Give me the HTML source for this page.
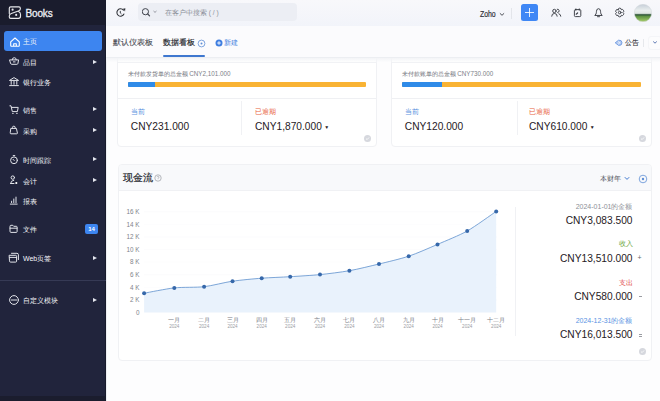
<!DOCTYPE html>
<html><head><meta charset="utf-8">
<style>
*{margin:0;padding:0;box-sizing:border-box}
html,body{width:660px;height:401px;overflow:hidden;background:#fdfdfe;font-family:"Liberation Sans",sans-serif;position:relative}
.a{position:absolute}
#sb{left:0;top:0;width:106px;height:401px;background:#21243c}
#sbh{left:0;top:0;width:106px;height:25px;background:#1a1c2d}
#sbb{left:0;top:396px;width:106px;height:5px;background:#1b1d2e}
.mi{position:absolute;left:0;width:106px;height:20px;color:#f4f5f9;font-size:7px;line-height:20px;}
.mi .t{position:absolute;left:23px;top:1.2px}
.mi .ar{position:absolute;left:93px;top:7.5px;width:0;height:0;border-left:4px solid #e4e6ee;border-top:2.5px solid transparent;border-bottom:2.5px solid transparent}
.mi svg{position:absolute;left:9px;top:5px}
.badge{position:absolute;left:85px;top:5px;width:13px;height:10px;background:#3d85f0;border-radius:2px;color:#fff;font-size:6px;line-height:10px;text-align:center;font-weight:bold}
#top{left:106px;top:0;width:554px;height:26px;background:linear-gradient(#f8f8fb,#f2f4fa)}
#tabs{left:106px;top:26px;width:554px;height:31px;background:#fbfbfd}
.card{position:absolute;background:#fff;border:1px solid #f0f1f4;border-radius:4px}
.lbl{position:absolute;font-size:6px;line-height:8px;white-space:nowrap}
.num{position:absolute;font-size:10.2px;line-height:12px;color:#1f2024;white-space:nowrap}
.gi{position:absolute;width:7px;height:7px}
</style></head><body>
<div id="sb" class="a"></div>
<div id="sbh" class="a"></div>
<div id="sbb" class="a"></div><div class="a" style="left:105px;top:0;width:1px;height:401px;background:#181b2b"></div><div class="a" style="left:106px;top:0;width:1px;height:401px;background:#eceef3"></div>
<svg class="a" style="left:8px;top:5px" width="14" height="15" viewBox="0 0 14 15" fill="none" stroke="#e6e7ec" stroke-width="1.15" stroke-linejoin="round" stroke-linecap="round"><path d="M1.3 8.6 V3.3 Q1.3 1.9 2.7 1.9 H10.9 Q12.4 1.9 12.4 3.4 Q12.4 5.3 10.4 6 L3.3 8.5 Q1.3 9.2 1.3 11 V11.9 Q1.3 13.3 2.7 13.3 H10.5 Q12.5 13.3 12.5 11.3 V9.4 Q12.5 7.4 10.9 6.7"/><circle cx="4.6" cy="4.7" r="1.1" fill="#e6e7ec" stroke="none"/><circle cx="8.2" cy="9.9" r="1.05" fill="#e6e7ec" stroke="none"/></svg>
<div class="a" style="left:25.5px;top:6.5px;font-size:10px;line-height:13px;color:#eceef3;-webkit-text-stroke:0.3px #eceef3;letter-spacing:-0.15px">Books</div>
<div class="a" style="left:4px;top:31px;width:98px;height:20px;background:#3d85f0;border-radius:3px"></div><div class="mi" style="top:31.0px"><span class="t">主页</span></div><div class="mi" style="top:52.0px"><span class="t">品目</span><i class="ar"></i></div><div class="mi" style="top:72.0px"><span class="t">银行业务</span></div><div class="mi" style="top:99.5px"><span class="t">销售</span><i class="ar"></i></div><div class="mi" style="top:120.5px"><span class="t">采购</span><i class="ar"></i></div><div class="mi" style="top:149.5px"><span class="t">时间跟踪</span><i class="ar"></i></div><div class="mi" style="top:170.5px"><span class="t">会计</span><i class="ar"></i></div><div class="mi" style="top:190.5px"><span class="t">报表</span></div><div class="mi" style="top:219.0px"><span class="t">文件</span><span class="badge">14</span></div><div class="mi" style="top:248.0px"><span class="t">Web页签</span><i class="ar"></i></div><div class="a" style="left:0;top:279.5px;width:106px;height:1px;background:#363a55"></div><div class="mi" style="top:290.0px"><span class="t">自定义模块</span><i class="ar"></i></div><svg class="a" style="left:0;top:0" width="106" height="401" viewBox="0 0 106 401" fill="none" stroke-linejoin="round" stroke-linecap="round"><path d="M10.7 41.8 L15 38 L19.3 41.8 V45.6 Q19.3 46.3 18.6 46.3 H11.4 Q10.7 46.3 10.7 45.6 Z M13.7 46.3 V43.7 H16.3 V46.3" stroke="#fff" stroke-width="1.1"/><path d="M12.2 59.8 Q12.2 57.7 14.25 57.7 Q16.3 57.7 16.3 59.8 M9.9 59.9 H18.6 L17.9 63.5 Q17.7 64.3 16.9 64.3 H11.6 Q10.8 64.3 10.6 63.5 Z M13.4 61.9 H15.1" stroke="#e2e4ea" stroke-width="1"/><path d="M9.8 80.2 L14 77.6 L18.2 80.2 Z M11.2 81.3 V84.3 M14 81.3 V84.3 M16.8 81.3 V84.3 M9.6 85.6 H18.4" stroke="#e2e4ea" stroke-width="1"/><path d="M9.9 105.8 H11 L12.3 111.6 H17.4 L18.2 107.4 H11.5" stroke="#e2e4ea" stroke-width="1"/><circle cx="12.9" cy="113.4" r="0.7" fill="#e2e4ea"/><circle cx="16.9" cy="113.4" r="0.7" fill="#e2e4ea"/><path d="M12.4 128.4 V127.6 Q12.4 126.2 13.8 126.2 Q15.2 126.2 15.2 127.6 V128.4 M11.2 128.4 H16.4 L17.4 133 Q17.5 133.8 16.7 133.8 H10.9 Q10.1 133.8 10.2 133 Z" stroke="#e2e4ea" stroke-width="1"/><circle cx="14" cy="160.3" r="3.4" stroke="#e2e4ea" stroke-width="1"/><path d="M13.2 155.6 H14.8 M13 159.3 L14.2 160.5" stroke="#e2e4ea" stroke-width="1"/><circle cx="12.8" cy="177.6" r="1.7" stroke="#e2e4ea" stroke-width="1"/><path d="M10.6 183.5 Q10.6 180.6 13.8 180.2" stroke="#e2e4ea" stroke-width="1"/><path d="M10.6 183.5 H14" stroke="#e2e4ea" stroke-width="1"/><circle cx="16.3" cy="183" r="1.1" fill="#fff" stroke="none"/><path d="M10.3 204.1 H17.2 M11.6 202.6 V201.2 M13.8 202.6 V199 M16 202.6 V197.1" stroke="#e2e4ea" stroke-width="1"/><path d="M10 226.2 Q10 225.3 10.9 225.3 H12.8 L13.7 226.3 H16.3 Q17.1 226.3 17.1 227.1 V231.6 Q17.1 232.4 16.3 232.4 H10.8 Q10 232.4 10 231.6 Z M10 228.2 H17.1" stroke="#e2e4ea" stroke-width="1"/><path d="M11.5 253.3 H17 Q18.4 253.3 18.4 254.7 V259.6" stroke="#e2e4ea" stroke-width="1"/><path d="M9.5 255.3 H15.6 Q16.6 255.3 16.6 256.3 V261.2 Q16.6 262.1 15.6 262.1 H10.5 Q9.5 262.1 9.5 261.2 Z M9.5 257.4 H16.6" stroke="#e2e4ea" stroke-width="1"/><circle cx="14" cy="300" r="4.4" stroke="#e2e4ea" stroke-width="1"/><path d="M11.4 300 H16.6" stroke="#e2e4ea" stroke-width="1"/></svg>
<!-- top bar -->
<div id="top" class="a"></div>
<svg class="a" style="left:106px;top:0" width="30" height="26" viewBox="106 0 30 26" fill="none" stroke="#2f3238" stroke-width="1.05" stroke-linecap="round"><path d="M123.43 10.12 A3.7 3.7 0 1 0 123.95 14.06"/><path d="M123.2 8.9 L125.2 8.6 L124.8 10.8 Z" fill="#2f3238" stroke-width="0.4" stroke-linejoin="round"/><path d="M120.3 11.3 V13 L121.2 13.7" stroke-width="0.9"/></svg>
<div class="a" style="left:138px;top:3px;width:159px;height:18px;background:#eceef4;border-radius:4px"></div>
<svg class="a" style="left:142px;top:7px" width="18" height="10" viewBox="0 0 18 10"><circle cx="3.4" cy="4.7" r="3.1" fill="none" stroke="#3f434c" stroke-width="1"/><path d="M5.7 7 L7.6 8.9" stroke="#3f434c" stroke-width="1.1" stroke-linecap="round"/><path d="M11.5 4 L13 5.4 L14.5 4" fill="none" stroke="#7d808a" stroke-width="0.8"/></svg>
<div class="a" style="left:165px;top:8px;font-size:6.6px;line-height:9px;color:#8b8e98;white-space:nowrap">在客户中搜索 ( / )</div>
<div class="a" style="left:480.3px;top:9px;font-size:8.5px;line-height:11px;color:#2e3036;-webkit-text-stroke:0.2px #2e3036;transform:scaleX(0.81);transform-origin:0 0;white-space:nowrap">Zoho</div>
<svg class="a" style="left:498.5px;top:11.5px" width="6" height="5" viewBox="0 0 6 5"><path d="M0.9 1.3 L3 3.3 L5.1 1.3" fill="none" stroke="#3a3d45" stroke-width="0.9"/></svg>
<div class="a" style="left:511px;top:8px;width:1px;height:11px;background:#e3e5ea"></div>
<div class="a" style="left:521px;top:4px;width:17px;height:17px;background:#3f87f5;border-radius:2.5px"></div>
<svg class="a" style="left:521px;top:4px" width="17" height="17" viewBox="0 0 17 17"><path d="M8.5 4 V13 M4 8.5 H13" stroke="#fff" stroke-width="0.85"/></svg>
<svg class="a" style="left:540px;top:0" width="120" height="26" viewBox="540 0 120 26" fill="none" stroke="#3a3d45" stroke-width="0.95" stroke-linecap="round" stroke-linejoin="round"><circle cx="554.4" cy="11" r="1.7"/><path d="M551.7 16.2 A2.75 2.75 0 0 1 557.2 16.2"/><path d="M557.3 9.2 A1.6 1.6 0 1 1 557.7 12.5 M558.9 13.7 A2.6 2.6 0 0 1 560.8 16.2"/><rect x="574.4" y="9.6" width="6.4" height="7" rx="1"/><path d="M575.9 8.9 V10.2 M579.3 8.9 V10.2"/><path d="M576.2 14.2 L577.6 13" stroke-width="1.2"/><path d="M595.1 15.2 Q596.4 14.1 596.4 12.3 V11.7 Q596.4 8.7 598.5 8.7 Q600.6 8.7 600.6 11.7 V12.3 Q600.6 14.1 601.9 15.2 Z"/><path d="M597.5 16.7 H599.5"/><path d="M618.10 9.73 A1.45 1.45 0 0 1 621.30 9.73 A1.45 1.45 0 0 1 622.90 12.50 A1.45 1.45 0 0 1 621.30 15.27 A1.45 1.45 0 0 1 618.10 15.27 A1.45 1.45 0 0 1 616.50 12.50 A1.45 1.45 0 0 1 618.10 9.73 Z"/><circle cx="619.7" cy="12.5" r="1.3"/></svg><svg class="a" style="left:634px;top:3.5px" width="18" height="18" viewBox="0 0 18 18"><defs><clipPath id="cp"><circle cx="9" cy="9" r="8.7"/></clipPath><linearGradient id="av" x1="0" y1="0" x2="0" y2="1"><stop offset="0" stop-color="#c6ced8"/><stop offset="0.35" stop-color="#e9eeee"/><stop offset="0.52" stop-color="#dfe6e2"/><stop offset="0.6" stop-color="#2e5538"/><stop offset="0.7" stop-color="#5f9444"/><stop offset="1" stop-color="#a7cd6a"/></linearGradient></defs><circle cx="9" cy="9" r="8.7" fill="url(#av)"/><circle cx="9" cy="9" r="8.7" fill="none" stroke="#d3d6db" stroke-width="0.5"/></svg>
<div class="card" style="left:117px;top:40px;width:260px;height:107px"></div><div class="a" style="left:118px;top:98px;width:258px;height:1px;background:#eff0f3"></div><div class="lbl" style="left:127.5px;top:70px;color:#6b6e76">未付款发货单的总金额 <span style="color:#7d8088;font-size:6.3px">CNY2,101.000</span></div><div class="a" style="left:127.5px;top:81.5px;width:238.5px;height:5.5px;background:#f9b334;border-radius:1px"></div><div class="a" style="left:127.5px;top:81.5px;width:27.2px;height:5.5px;background:#2f8be8;border-radius:1px 0 0 1px"></div><div class="a" style="left:241px;top:101px;width:1px;height:34px;background:#f0f1f4"></div><div class="lbl" style="left:130.7px;top:107.5px;color:#5c92e0;font-size:6.6px">当前</div><div class="num" style="left:130.8px;top:121px">CNY231.000</div><div class="lbl" style="left:255px;top:107.5px;color:#e8623e;font-size:6.6px">已逾期</div><div class="num" style="left:255px;top:121px">CNY1,870.000 <span style="font-size:5px;position:relative;top:-1.5px;left:-0.5px">&#9660;</span></div><div class="gi" style="left:364.0px;top:134.5px"><svg width="7" height="7" viewBox="0 0 7 7" style="display:block"><circle cx="3.5" cy="3.5" r="3.5" fill="#d6d8de"/><path d="M2 3.6 L3.1 4.6 L5 2.5" fill="none" stroke="#fff" stroke-width="0.8"/></svg></div><div class="card" style="left:391px;top:40px;width:261px;height:107px"></div><div class="a" style="left:392px;top:98px;width:259px;height:1px;background:#eff0f3"></div><div class="lbl" style="left:401.5px;top:70px;color:#6b6e76">未付款账单的总金额 <span style="color:#7d8088;font-size:6.3px">CNY730.000</span></div><div class="a" style="left:401.5px;top:81.5px;width:239.5px;height:5.5px;background:#f9b334;border-radius:1px"></div><div class="a" style="left:401.5px;top:81.5px;width:40.8px;height:5.5px;background:#2f8be8;border-radius:1px 0 0 1px"></div><div class="a" style="left:517px;top:101px;width:1px;height:34px;background:#f0f1f4"></div><div class="lbl" style="left:404.7px;top:107.5px;color:#5c92e0;font-size:6.6px">当前</div><div class="num" style="left:404.8px;top:121px">CNY120.000</div><div class="lbl" style="left:529px;top:107.5px;color:#e8623e;font-size:6.6px">已逾期</div><div class="num" style="left:529px;top:121px">CNY610.000 <span style="font-size:5px;position:relative;top:-1.5px;left:-0.5px">&#9660;</span></div><div class="gi" style="left:639.0px;top:134.5px"><svg width="7" height="7" viewBox="0 0 7 7" style="display:block"><circle cx="3.5" cy="3.5" r="3.5" fill="#d6d8de"/><path d="M2 3.6 L3.1 4.6 L5 2.5" fill="none" stroke="#fff" stroke-width="0.8"/></svg></div>
<!-- tabs -->
<div id="tabs" class="a"></div>
<div class="a" style="left:106px;top:57px;width:554px;height:1px;background:#eceef2"></div><div class="a" style="left:106px;top:58px;width:554px;height:4px;background:linear-gradient(#f3f4f7,rgba(250,251,252,0.3))"></div><div class="a" style="left:118px;top:62px;width:259px;height:1px;background:#f1f2f5"></div><div class="a" style="left:392px;top:62px;width:260px;height:1px;background:#f1f2f5"></div>
<div class="a" style="left:113px;top:38px;font-size:8px;line-height:10px;color:#45484f;-webkit-text-stroke:0.1px #45484f;white-space:nowrap">默认仪表板</div>
<div class="a" style="left:163px;top:38px;font-size:8px;line-height:10px;color:#22242a;-webkit-text-stroke:0.15px #22242a;white-space:nowrap">数据看板</div>
<svg class="a" style="left:197px;top:39px" width="9" height="9" viewBox="0 0 9 9"><circle cx="4.5" cy="4.5" r="3.4" fill="none" stroke="#5f8fd6" stroke-width="0.8"/><circle cx="4.5" cy="4.5" r="1" fill="#5f8fd6"/></svg>
<div class="a" style="left:163px;top:55px;width:42px;height:2px;background:#3e77cf;border-radius:1px"></div>
<svg class="a" style="left:215px;top:38.5px" width="8" height="8" viewBox="0 0 8 8"><circle cx="4" cy="4" r="3.5" fill="#3f7ee0"/><path d="M4 2.2 V5.8 M2.2 4 H5.8" stroke="#fff" stroke-width="0.9"/></svg>
<div class="a" style="left:224px;top:38px;font-size:7px;line-height:9px;color:#3f7ee0;white-space:nowrap">新建</div>
<svg class="a" style="left:613px;top:38px" width="11" height="10" viewBox="613 38 11 10"><path d="M615.2 42.8 L618.6 40.2 Q621.9 39.8 622 42.8 Q621.9 45.8 618.6 45.4 Z" fill="#b7cdf2" stroke="#6d98e0" stroke-width="0.9" stroke-linejoin="round"/><path d="M618.3 41.6 L619.8 42.8 L618.3 44" fill="none" stroke="#fff" stroke-width="0.7"/></svg>
<div class="a" style="left:625px;top:38.3px;font-size:7px;line-height:9px;color:#2b2d33;-webkit-text-stroke:0.1px #2b2d33;white-space:nowrap">公告</div>
<div class="a" style="left:643px;top:39px;width:1px;height:8px;background:#e6e8ec"></div>
<div class="a" style="left:648px;top:36px;width:14px;height:14px;border:1px solid #f4f5f8;border-radius:3px;background:#fcfcfd"></div>
<svg class="a" style="left:652px;top:40px" width="6" height="5" viewBox="0 0 6 5"><path d="M1.2 1.5 L3 3.2 L4.8 1.5" fill="none" stroke="#4a68a8" stroke-width="0.9"/></svg>
<div class="card" style="left:118px;top:164px;width:534px;height:197px;overflow:hidden"><div style="height:26px;background:#f8f9fb;border-bottom:1px solid #f0f1f4"></div></div><div class="a" style="left:123px;top:172px;font-size:9.5px;line-height:12px;color:#26282e;-webkit-text-stroke:0.2px #26282e;white-space:nowrap">现金流</div><svg class="a" style="left:154px;top:174px" width="8" height="8" viewBox="0 0 8 8"><circle cx="4" cy="4" r="3.2" fill="none" stroke="#9a9ca4" stroke-width="0.7"/><path d="M3 3.2 A1 1 0 1 1 4 4.2 V4.8 M4 5.8 V6" fill="none" stroke="#9a9ca4" stroke-width="0.6"/></svg><div class="a" style="left:600px;top:174px;font-size:7px;line-height:9px;color:#50535b;white-space:nowrap">本财年</div><svg class="a" style="left:623.5px;top:176px" width="6" height="5" viewBox="0 0 6 5"><path d="M0.8 1.2 L3 3.4 L5.2 1.2" fill="none" stroke="#3e77cf" stroke-width="1"/></svg><svg class="a" style="left:638px;top:173.5px" width="10" height="10" viewBox="0 0 10 10"><circle cx="5" cy="5" r="3.8" fill="none" stroke="#5f8fd6" stroke-width="0.8"/><circle cx="5" cy="5" r="1.2" fill="#5f8fd6"/></svg><div class="a" style="left:515px;top:207px;width:1px;height:129px;background:#f0f1f4"></div><div class="a" style="right:27.5px;top:202.0px;font-size:7px;line-height:10px;color:#8d9098;white-space:nowrap">2024-01-01的金额</div><div class="a" style="right:27.5px;top:216.2px;font-size:10.2px;line-height:10px;color:#1f2024;white-space:nowrap">CNY3,083.500</div><div class="a" style="right:27.5px;top:239.0px;font-size:7px;line-height:10px;color:#72a843;white-space:nowrap">收入</div><div class="a" style="right:27.5px;top:253.7px;font-size:10.2px;line-height:10px;color:#1f2024;white-space:nowrap">CNY13,510.000</div><div class="a" style="left:637.5px;top:253px;font-size:7px;line-height:10px;color:#666">+</div><div class="a" style="right:27.5px;top:278.0px;font-size:7px;line-height:10px;color:#e0463f;white-space:nowrap">支出</div><div class="a" style="right:27.5px;top:292.2px;font-size:10.2px;line-height:10px;color:#1f2024;white-space:nowrap">CNY580.000</div><div class="a" style="left:638.5px;top:296px;width:3px;height:1px;background:#9a9ca2"></div><div class="a" style="right:27.5px;top:316.0px;font-size:7px;line-height:10px;color:#5a93e3;white-space:nowrap">2024-12-31的金额</div><div class="a" style="right:27.5px;top:330.2px;font-size:10.2px;line-height:10px;color:#1f2024;white-space:nowrap">CNY16,013.500</div><div class="a" style="left:638.5px;top:333.5px;width:3px;height:1px;background:#9a9ca2"></div><div class="a" style="left:638.5px;top:335.5px;width:3px;height:1px;background:#9a9ca2"></div><div class="gi" style="left:639px;top:347.5px"><svg width="7" height="7" viewBox="0 0 7 7" style="display:block"><circle cx="3.5" cy="3.5" r="3.5" fill="#d6d8de"/><path d="M2 3.6 L3.1 4.6 L5 2.5" fill="none" stroke="#fff" stroke-width="0.8"/></svg></div><svg class="a" style="left:0;top:0" width="660" height="401" viewBox="0 0 660 401"><line x1="144" x2="497" y1="211.7" y2="211.7" stroke="#f8f8fa" stroke-width="0.5"/><line x1="144" x2="497" y1="224.3" y2="224.3" stroke="#f8f8fa" stroke-width="0.5"/><line x1="144" x2="497" y1="236.9" y2="236.9" stroke="#f8f8fa" stroke-width="0.5"/><line x1="144" x2="497" y1="249.5" y2="249.5" stroke="#f8f8fa" stroke-width="0.5"/><line x1="144" x2="497" y1="262.1" y2="262.1" stroke="#f8f8fa" stroke-width="0.5"/><line x1="144" x2="497" y1="274.7" y2="274.7" stroke="#f8f8fa" stroke-width="0.5"/><line x1="144" x2="497" y1="287.3" y2="287.3" stroke="#f8f8fa" stroke-width="0.5"/><line x1="144" x2="497" y1="299.9" y2="299.9" stroke="#f8f8fa" stroke-width="0.5"/><path d="M144.1 293.2 C148.1 292.5 166.3 288.8 174.3 287.9 C182.3 287.0 196.3 287.6 204.1 286.7 C211.9 285.8 224.8 282.3 232.5 281.2 C240.2 280.1 254.0 278.8 261.7 278.2 C269.4 277.6 282.4 277.2 290.2 276.7 C298.0 276.2 312.1 275.4 320.0 274.6 C327.9 273.8 341.5 272.1 349.4 270.7 C357.3 269.3 371.1 265.9 379.0 264.0 C386.9 262.1 400.9 258.8 408.7 256.2 C416.5 253.6 429.7 247.8 437.5 244.4 C445.3 241.0 459.4 235.4 467.2 231.0 C475.0 226.6 492.3 214.0 496.2 211.4 L496.2 312.5 L144.1 312.5 Z" fill="#e9f2fc"/><path d="M144.1 293.2 C148.1 292.5 166.3 288.8 174.3 287.9 C182.3 287.0 196.3 287.6 204.1 286.7 C211.9 285.8 224.8 282.3 232.5 281.2 C240.2 280.1 254.0 278.8 261.7 278.2 C269.4 277.6 282.4 277.2 290.2 276.7 C298.0 276.2 312.1 275.4 320.0 274.6 C327.9 273.8 341.5 272.1 349.4 270.7 C357.3 269.3 371.1 265.9 379.0 264.0 C386.9 262.1 400.9 258.8 408.7 256.2 C416.5 253.6 429.7 247.8 437.5 244.4 C445.3 241.0 459.4 235.4 467.2 231.0 C475.0 226.6 492.3 214.0 496.2 211.4" fill="none" stroke="#6596d0" stroke-width="0.85"/><circle cx="144.1" cy="293.2" r="2" fill="#3668aa"/><circle cx="174.3" cy="287.9" r="2" fill="#3668aa"/><circle cx="204.1" cy="286.7" r="2" fill="#3668aa"/><circle cx="232.5" cy="281.2" r="2" fill="#3668aa"/><circle cx="261.7" cy="278.2" r="2" fill="#3668aa"/><circle cx="290.2" cy="276.7" r="2" fill="#3668aa"/><circle cx="320.0" cy="274.6" r="2" fill="#3668aa"/><circle cx="349.4" cy="270.7" r="2" fill="#3668aa"/><circle cx="379.0" cy="264.0" r="2" fill="#3668aa"/><circle cx="408.7" cy="256.2" r="2" fill="#3668aa"/><circle cx="437.5" cy="244.4" r="2" fill="#3668aa"/><circle cx="467.2" cy="231.0" r="2" fill="#3668aa"/><circle cx="496.2" cy="211.4" r="2" fill="#3668aa"/><text x="139.5" y="213.9" text-anchor="end" font-size="6.3" fill="#80838b">16 K</text><text x="139.5" y="226.5" text-anchor="end" font-size="6.3" fill="#80838b">14 K</text><text x="139.5" y="239.1" text-anchor="end" font-size="6.3" fill="#80838b">12 K</text><text x="139.5" y="251.7" text-anchor="end" font-size="6.3" fill="#80838b">10 K</text><text x="139.5" y="264.3" text-anchor="end" font-size="6.3" fill="#80838b">8 K</text><text x="139.5" y="276.9" text-anchor="end" font-size="6.3" fill="#80838b">6 K</text><text x="139.5" y="289.5" text-anchor="end" font-size="6.3" fill="#80838b">4 K</text><text x="139.5" y="302.1" text-anchor="end" font-size="6.3" fill="#80838b">2 K</text><text x="139.5" y="314.7" text-anchor="end" font-size="6.3" fill="#80838b">0</text><text x="174.3" y="322.2" text-anchor="middle" font-size="6.3" fill="#7a7d86">一月</text><text x="174.3" y="328.2" text-anchor="middle" font-size="4.6" fill="#9a9ca3">2024</text><text x="204.1" y="322.2" text-anchor="middle" font-size="6.3" fill="#7a7d86">二月</text><text x="204.1" y="328.2" text-anchor="middle" font-size="4.6" fill="#9a9ca3">2024</text><text x="232.5" y="322.2" text-anchor="middle" font-size="6.3" fill="#7a7d86">三月</text><text x="232.5" y="328.2" text-anchor="middle" font-size="4.6" fill="#9a9ca3">2024</text><text x="261.7" y="322.2" text-anchor="middle" font-size="6.3" fill="#7a7d86">四月</text><text x="261.7" y="328.2" text-anchor="middle" font-size="4.6" fill="#9a9ca3">2024</text><text x="290.2" y="322.2" text-anchor="middle" font-size="6.3" fill="#7a7d86">五月</text><text x="290.2" y="328.2" text-anchor="middle" font-size="4.6" fill="#9a9ca3">2024</text><text x="320.0" y="322.2" text-anchor="middle" font-size="6.3" fill="#7a7d86">六月</text><text x="320.0" y="328.2" text-anchor="middle" font-size="4.6" fill="#9a9ca3">2024</text><text x="349.4" y="322.2" text-anchor="middle" font-size="6.3" fill="#7a7d86">七月</text><text x="349.4" y="328.2" text-anchor="middle" font-size="4.6" fill="#9a9ca3">2024</text><text x="379.0" y="322.2" text-anchor="middle" font-size="6.3" fill="#7a7d86">八月</text><text x="379.0" y="328.2" text-anchor="middle" font-size="4.6" fill="#9a9ca3">2024</text><text x="408.7" y="322.2" text-anchor="middle" font-size="6.3" fill="#7a7d86">九月</text><text x="408.7" y="328.2" text-anchor="middle" font-size="4.6" fill="#9a9ca3">2024</text><text x="437.5" y="322.2" text-anchor="middle" font-size="6.3" fill="#7a7d86">十月</text><text x="437.5" y="328.2" text-anchor="middle" font-size="4.6" fill="#9a9ca3">2024</text><text x="467.2" y="322.2" text-anchor="middle" font-size="6.3" fill="#7a7d86">十一月</text><text x="467.2" y="328.2" text-anchor="middle" font-size="4.6" fill="#9a9ca3">2024</text><text x="496.2" y="322.2" text-anchor="middle" font-size="6.3" fill="#7a7d86">十二月</text><text x="496.2" y="328.2" text-anchor="middle" font-size="4.6" fill="#9a9ca3">2024</text></svg>
</body></html>
